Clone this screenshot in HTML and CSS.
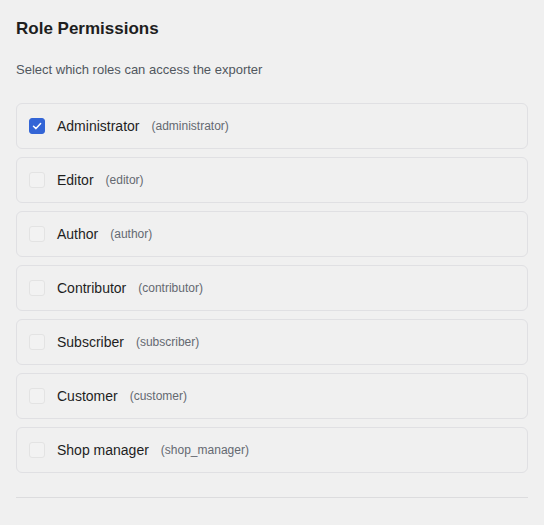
FILE: index.html
```html
<!DOCTYPE html>
<html lang="en">
<head>
    <meta charset="UTF-8">
    <meta name="viewport" content="width=device-width, initial-scale=1.0">
    <title>Role Permissions</title>
    <link rel="stylesheet" href="styles.css">
</head>
<body>
    <div class="panel">
        <h2 class="titulo">Role Permissions</h2>
        <p class="descripcion">Select which roles can access the exporter</p>

        <!-- Lista de roles -->
        <div class="roles">
            <label class="rol">
                <span class="check marcado">
                    <svg width="12" height="12" viewBox="0 0 12 12"><path d="M2.5 6.2 L5 8.6 L9.6 3.6" fill="none" stroke="#fff" stroke-width="1.5" stroke-linecap="round" stroke-linejoin="round"/></svg>
                </span>
                <span class="nombre">Administrator</span>
                <span class="slug">(administrator)</span>
            </label>
            <label class="rol">
                <span class="check"></span>
                <span class="nombre">Editor</span>
                <span class="slug">(editor)</span>
            </label>
            <label class="rol">
                <span class="check"></span>
                <span class="nombre">Author</span>
                <span class="slug">(author)</span>
            </label>
            <label class="rol">
                <span class="check"></span>
                <span class="nombre">Contributor</span>
                <span class="slug">(contributor)</span>
            </label>
            <label class="rol">
                <span class="check"></span>
                <span class="nombre">Subscriber</span>
                <span class="slug">(subscriber)</span>
            </label>
            <label class="rol">
                <span class="check"></span>
                <span class="nombre">Customer</span>
                <span class="slug">(customer)</span>
            </label>
            <label class="rol">
                <span class="check"></span>
                <span class="nombre">Shop manager</span>
                <span class="slug">(shop_manager)</span>
            </label>
        </div>

        <hr class="separador">
    </div>
</body>
</html>
```

FILE: styles.css
```css
body {
    margin: 0;
    background: #f0f0f0;
    font-family: "Liberation Sans", Arial, sans-serif;
    color: #1e1e1e;
}
.panel {
    padding: 17px 16px 16px;
}
.titulo {
    margin: 0;
    font-size: 17px;
    line-height: 24px;
    font-weight: bold;
    color: #1e1e1e;
}
.descripcion {
    margin: 20px 0 0;
    font-size: 13px;
    line-height: 18px;
    color: #50575e;
}
.roles {
    display: flex;
    flex-direction: column;
    gap: 8px;
    margin-top: 24px;
}
.rol {
    display: flex;
    align-items: center;
    padding: 14px 12px;
    border: 1px solid #e0e0e3;
    border-radius: 6px;
}
.check {
    width: 16px;
    height: 16px;
    box-sizing: border-box;
    border: 1px solid #e3e3e3;
    border-radius: 3px;
    background: #f2f2f2;
    display: flex;
    align-items: center;
    justify-content: center;
    margin-right: 12px;
}
.check.marcado {
    background: #3365d6;
    border-color: #3365d6;
}
.nombre {
    font-size: 14px;
    line-height: 16px;
    color: #1e1e1e;
}
.slug {
    margin-left: 12px;
    font-size: 12px;
    line-height: 16px;
    color: #646970;
}
.separador {
    margin: 24px 0 0;
    border: 0;
    border-top: 1px solid #dcdcde;
}
```
